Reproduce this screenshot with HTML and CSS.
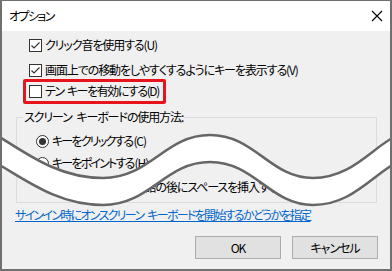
FILE: index.html
```html
<!DOCTYPE html>
<html lang="ja">
<head>
<meta charset="utf-8">
<link rel="stylesheet" href="styles.css">
</head>
<body>
<div class="window">
  <div class="titlebar">
    <span class="title">オプション</span>
    <svg class="close" width="12" height="12" viewBox="0 0 12 12"><path d="M1 1 L11 11 M11 1 L1 11" stroke="#000" stroke-width="1.1" fill="none"/></svg>
  </div>
  <div class="content">
    <div class="checks">
      <div class="row"><span class="cb"><svg width="11" height="11" viewBox="0 0 11 11"><path d="M1.5 5.5 L4 8 L9.5 2.5" stroke="#333" stroke-width="1.2" fill="none"/></svg></span><span>クリック音を使用する(U)</span></div>
      <div class="row row2"><span class="cb"><svg width="11" height="11" viewBox="0 0 11 11"><path d="M1.5 5.5 L4 8 L9.5 2.5" stroke="#333" stroke-width="1.2" fill="none"/></svg></span><span>画面上での移動をしやすくするようにキーを表示する(V)</span></div>
      <div class="highlight"><div class="row"><span class="cb"></span><span class="hl-text">テン キーを有効にする(D)</span></div></div>
    </div>
    <fieldset class="group">
      <legend>スクリーン キーボードの使用方法:</legend>
      <div class="row"><span class="rb on"></span><span class="kana">キーをクリックする</span><span>(C)</span></div>
      <div class="row r2"><span class="rb"></span><span class="kana">キーをポイントする</span><span>(H)</span></div>
      <div class="row r3"><span class="cb"></span><span>予測された単語の後にスペースを挿入する(S)</span></div>
    </fieldset>
    <a class="link" href="#">サインイン時にオンスクリーン キーボードを開始するかどうかを指定</a>
    <div class="buttons">
      <button class="btn">OK</button>
      <button class="btn">キャンセル</button>
    </div>
  </div>
  <svg class="wave" width="392" height="271" viewBox="0 0 392 271">
    <path d="M-2,136 C30,156 60,178 103,178 C150,178 165,135 210,135 C255,135 270,178 313,178 C350,178 370,150 394,137 L394,164 C370,178 350,205 313,205 C270,205 255,162 210,162 C165,162 150,205 103,205 C60,205 30,183 -2,164 Z" fill="#fff"/>
    <path d="M-2,136 C30,156 60,178 103,178 C150,178 165,135 210,135 C255,135 270,178 313,178 C350,178 370,150 394,137" fill="none" stroke="#666" stroke-width="2.5"/>
    <path d="M-2,164 C30,183 60,205 103,205 C150,205 165,162 210,162 C255,162 270,205 313,205 C350,205 370,178 394,164" fill="none" stroke="#666" stroke-width="2.5"/>
  </svg>
</div>
</body>
</html>
```
FILE: styles.css
```css
html, body {
  margin: 0;
  padding: 0;
}
body {
  font-family: "Noto Sans CJK JP", "Noto Sans", sans-serif;
  font-size: 12px;
  font-feature-settings: "palt";
  letter-spacing: -1.1px;
  word-spacing: 3px;
  color: #000;
}
.window {
  position: relative;
  width: 392px;
  height: 271px;
  box-sizing: border-box;
  border: solid #707070;
  border-width: 1px 2px 2px 2px;
  display: flex;
  flex-direction: column;
  overflow: hidden;
}
.titlebar {
  height: 30px;
  background: #fff;
  display: flex;
  align-items: center;
  justify-content: space-between;
  padding: 0 7px 0 7px;
  flex-shrink: 0;
}
.title {
  line-height: 16px;
  letter-spacing: -1.6px;
}
.content {
  flex: 1;
  background: #f0f0f0;
  display: flex;
  flex-direction: column;
  padding-top: 6px;
}
.row {
  display: flex;
  align-items: center;
  height: 16px;
  line-height: 16px;
  white-space: nowrap;
}
.checks {
  padding-left: 27px;
  display: flex;
  flex-direction: column;
  align-items: flex-start;
}
.checks .row .cb { margin-right: 3px; }
.row2 {
  margin-top: 9px;
}
.highlight {
  margin-left: -6px;
  margin-top: 1px;
  width: 143px;
  height: 25px;
  box-sizing: border-box;
  border: 3px solid #e8141b;
  border-radius: 2px;
  padding: 1px 0 0 3px;
}
.hl-text {
  letter-spacing: -1.45px;
  word-spacing: 2px;
}
.cb {
  width: 13px;
  height: 13px;
  box-sizing: border-box;
  border: 1px solid #333;
  background: #fff;
  display: inline-flex;
  align-items: center;
  justify-content: center;
  flex-shrink: 0;
}
.rb {
  width: 13px;
  height: 13px;
  box-sizing: border-box;
  border: 1px solid #333;
  border-radius: 50%;
  background: #fff;
  display: inline-flex;
  align-items: center;
  justify-content: center;
  margin-right: 3px;
  flex-shrink: 0;
}
.rb.on::after {
  content: "";
  width: 7px;
  height: 7px;
  border-radius: 50%;
  background: #333;
}
.kana {
  letter-spacing: -1.8px;
  margin-right: 1px;
}
.group {
  margin: 5px 13px 0 14px;
  padding: 0 0 7px 19px;
  border: 1px solid #dcdcdc;
  min-width: 0;
}
.group legend {
  padding: 0 1px;
  margin-left: -13px;
  line-height: 16px;
  height: 16px;
}
.group .row:first-of-type {
  margin-top: 8px;
}
.group .r2 { margin-top: 6px; }
.group .r3 { margin-top: 8px; margin-left: 29px; }
.group .r3 .cb { margin-right: 3px; }
.link {
  margin: 4px 0 0 13px;
  color: #0066cc;
  text-decoration: underline;
  line-height: 16px;
  height: 16px;
  align-self: flex-start;
  white-space: nowrap;
  letter-spacing: -1.7px;
}
.buttons {
  display: flex;
  justify-content: flex-end;
  gap: 11px;
  margin-top: 13px;
  padding-right: 12px;
}
.btn {
  width: 86px;
  height: 23px;
  background: #e1e1e1;
  border: 1px solid #adadad;
  border-radius: 0;
  font-family: inherit;
  font-size: 12px;
  font-feature-settings: "palt";
  letter-spacing: -1px;
  color: #000;
  padding: 0;
  margin: 0;
}
.wave {
  position: absolute;
  left: -2px;
  top: -1px;
  pointer-events: none;
}
```
